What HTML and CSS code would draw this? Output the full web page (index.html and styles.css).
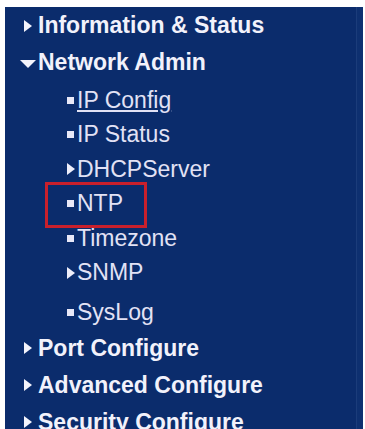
FILE: index.html
```html
<!DOCTYPE html>
<html lang="en">

<head>
    <meta charset="UTF-8">
    <title>Menu</title>
    <link rel="stylesheet" href="styles.css">
</head>

<body>
    <div class="menu">
        <ul class="tree">
            <li class="group">
                <div class="label"><span class="icon"><i class="arrow-right"></i></span>Information &amp; Status</div>
            </li>
            <li class="group">
                <div class="label"><span class="icon"><i class="arrow-down"></i></span>Network Admin</div>
                <ul class="sub">
                    <li class="item"><span class="icon"><i class="dot"></i></span><a href="#" class="current">IP Config</a></li>
                    <li class="item"><span class="icon"><i class="dot"></i></span>IP Status</li>
                    <li class="item"><span class="icon"><i class="arrow-small"></i></span>DHCPServer</li>
                    <li class="item selected"><span class="icon"><i class="dot"></i></span>NTP</li>
                    <li class="item"><span class="icon"><i class="dot"></i></span>Timezone</li>
                    <li class="item"><span class="icon"><i class="arrow-small"></i></span>SNMP</li>
                    <li class="item syslog"><span class="icon"><i class="dot"></i></span>SysLog</li>
                </ul>
            </li>
            <li class="group">
                <div class="label"><span class="icon"><i class="arrow-right"></i></span>Port Configure</div>
            </li>
            <li class="group">
                <div class="label"><span class="icon"><i class="arrow-right"></i></span>Advanced Configure</div>
            </li>
            <li class="group">
                <div class="label"><span class="icon"><i class="arrow-right"></i></span>Security Configure</div>
            </li>
        </ul>
    </div>
</body>

</html>
```

FILE: styles.css
```css
body {
    margin: 0;
    padding: 7px 2px 0 5px;
    background-color: white;
    font-family: 'Liberation Sans', Arial, sans-serif;
    height: 429px;
    box-sizing: border-box;
    overflow: hidden;
}

.menu {
    background-color: #0b2c6c;
    height: 430px;
    border-right: 6px solid #0e3070;
    box-shadow: inset -1px 0 0 #1b3c7a;
}

ul {
    list-style: none;
    margin: 0;
    padding: 0;
}

.label {
    display: flex;
    align-items: center;
    height: 37px;
    padding-left: 13px;
    font-size: 23px;
    font-weight: bold;
    color: #f2f2fb;
    white-space: nowrap;
}

.label .icon {
    width: 19px;
    margin-right: 1px;
}

.icon {
    display: flex;
    align-items: center;
    justify-content: center;
}

.arrow-right {
    border-left: 8px solid #f4f4fc;
    border-top: 6px solid transparent;
    border-bottom: 6px solid transparent;
}

.arrow-down {
    border-top: 8px solid #f4f4fc;
    border-left: 8px solid transparent;
    border-right: 8px solid transparent;
    margin-top: 3px;
}

.sub {
    margin-top: 2px;
    padding-left: 59px;
}

.item {
    position: relative;
    display: flex;
    align-items: center;
    height: 34.5px;
    font-size: 23px;
    color: #e2e2f5;
    white-space: nowrap;
}

.item .icon {
    width: 13px;
}

.dot {
    width: 7px;
    height: 7px;
    background-color: #e8e8f8;
}

.arrow-small {
    border-left: 8px solid #eeeefa;
    border-top: 6.5px solid transparent;
    border-bottom: 6.5px solid transparent;
}

.item a {
    color: #e2e2f5;
    text-decoration: none;
}

.item a.current {
    text-decoration: underline;
    text-underline-offset: 2px;
}

.syslog {
    margin-top: 5px;
}

.selected::after {
    content: '';
    position: absolute;
    left: -19px;
    top: -5px;
    width: 96px;
    height: 40px;
    border: 3px solid #c9202c;
}
```
